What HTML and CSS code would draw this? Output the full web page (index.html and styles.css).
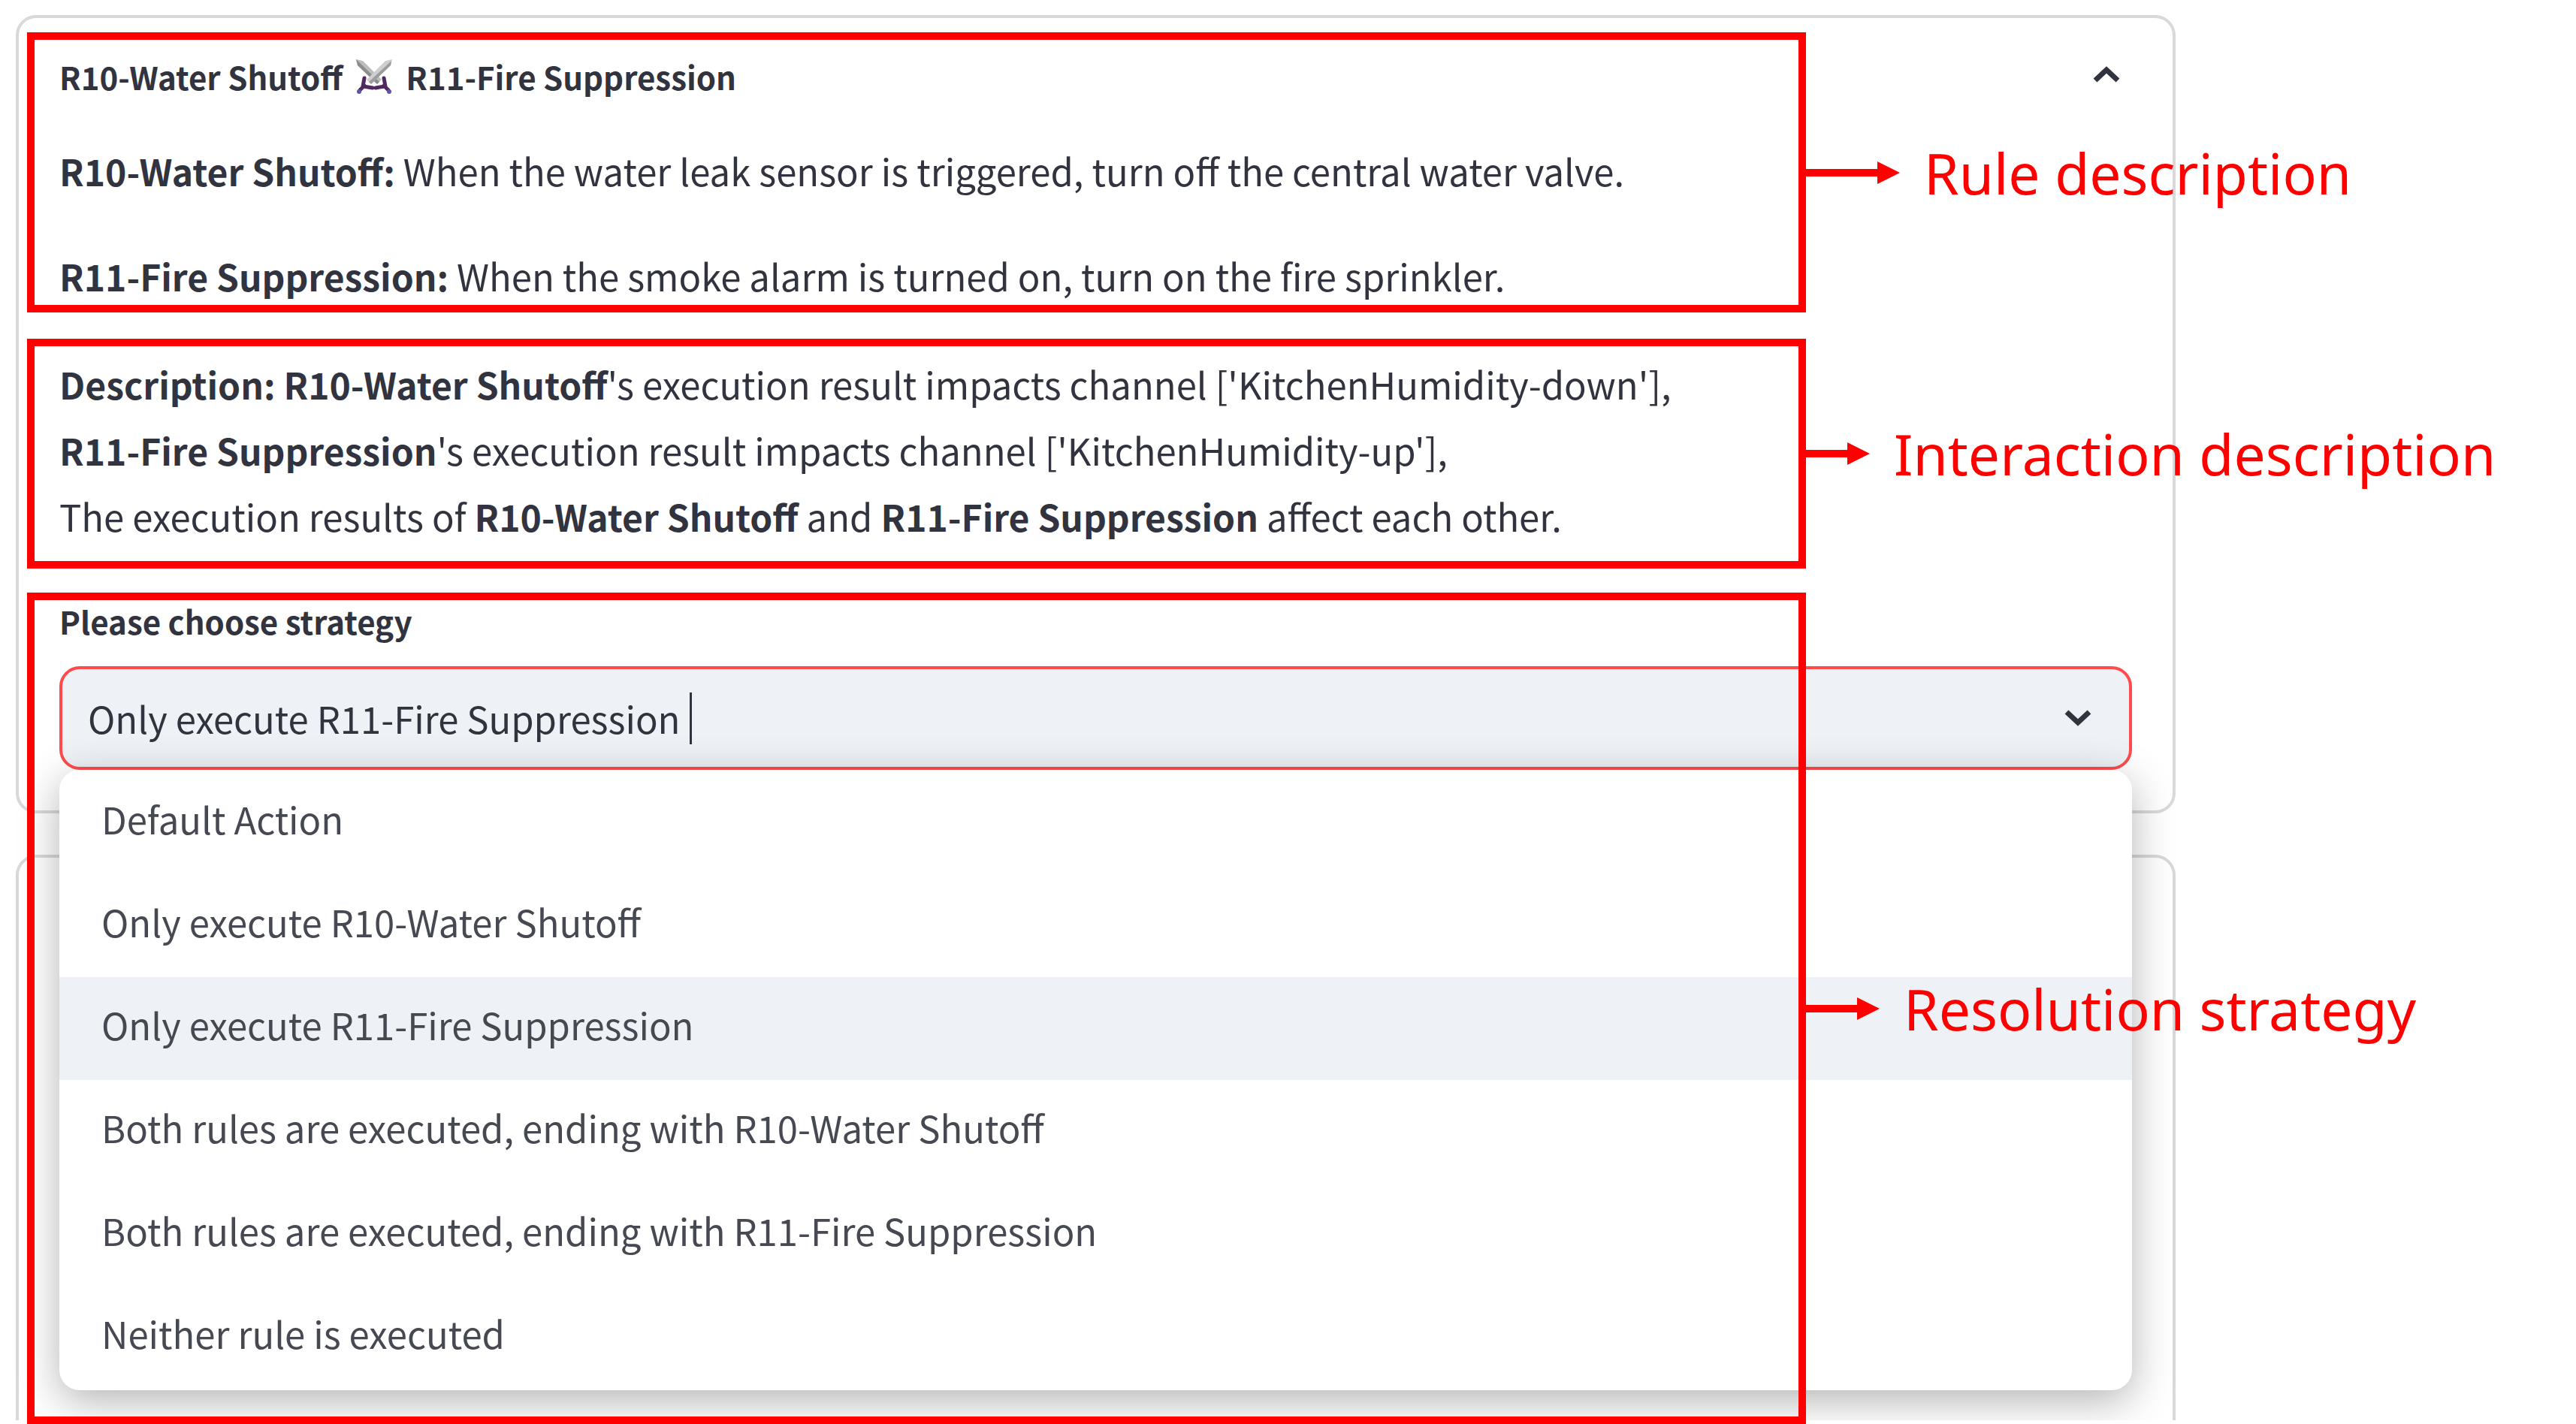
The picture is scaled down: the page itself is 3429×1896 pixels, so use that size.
FILE: index.html
```html
<!DOCTYPE html>
<html lang="en">
<head>
<meta charset="utf-8">
<title>Rule conflict resolution</title>
<link rel="stylesheet" href="styles.css">
</head>
<body>
<main>
  <article class="card">
    <section class="block rules">
      <header class="card-header">
        <h2 class="title">R10-Water Shutoff
          <svg class="swords" viewBox="0 0 50 48" aria-hidden="true">
            <g>
              <path d="M1 1l9 2 25 25-6 6L3 9z" fill="#bdbdbd"/>
              <path d="M1 1l31 30-3 3L3 9z" fill="#8c8c8c"/>
              <path d="M38 26l2 11M27 39l12-2M38 36l6 6" fill="none" stroke="#51285f" stroke-width="5" stroke-linecap="round"/>
              <circle cx="45" cy="44" r="3" fill="#5b55a5"/>
            </g>
            <g>
              <path d="M49 1l-9 2-25 25 6 6L47 9z" fill="#cfcfcf"/>
              <path d="M47 9L21 34l-3-3L48 3z" fill="#9c9c9c"/>
              <path d="M12 26l-2 11M23 39l-12-2M12 36l-6 6" fill="none" stroke="#51285f" stroke-width="5" stroke-linecap="round"/>
              <circle cx="5" cy="44" r="3" fill="#5b55a5"/>
            </g>
          </svg>
          R11-Fire Suppression</h2>
        <button class="toggle" type="button" aria-label="Collapse">
          <svg class="chevron" viewBox="0 0 36 22" aria-hidden="true"><path d="M3 19L18 5l15 14"/></svg>
        </button>
      </header>
      <p class="rule"><strong>R10-Water Shutoff:</strong> When the water leak sensor is triggered, turn off the central water valve.</p>
      <p class="rule"><strong>R11-Fire Suppression:</strong> When the smoke alarm is turned on, turn on the fire sprinkler.</p>
      <aside class="frame">
        <div class="callout"><span class="shaft shaft-long"></span><span class="head"></span><span class="label">Rule description</span></div>
      </aside>
    </section>

    <section class="block interaction">
      <p class="detail"><strong>Description: R10-Water Shutoff</strong>'s execution result impacts channel ['KitchenHumidity-down'],<br>
      <strong>R11-Fire Suppression</strong>'s execution result impacts channel ['KitchenHumidity-up'],<br>
      The execution results of <strong>R10-Water Shutoff</strong> and <strong>R11-Fire Suppression</strong> affect each other.</p>
      <aside class="frame">
        <div class="callout"><span class="shaft shaft-short"></span><span class="head"></span><span class="label">Interaction description</span></div>
      </aside>
    </section>

    <section class="block strategy">
      <label class="field-label" for="strategy">Please choose strategy</label>
      <div class="combo">
        <div class="control">
          <input id="strategy" class="value" type="text" role="combobox" aria-expanded="true" aria-controls="options" value="Only execute R11-Fire Suppression">
          <span class="caret"></span>
          <svg class="chevron" viewBox="0 0 36 22" aria-hidden="true"><path d="M3 3l15 14L33 3"/></svg>
        </div>
        <ul class="options" id="options" role="listbox">
          <li role="option">Default Action</li>
          <li role="option">Only execute R10-Water Shutoff</li>
          <li role="option" aria-selected="true">Only execute R11-Fire Suppression</li>
          <li role="option">Both rules are executed, ending with R10-Water Shutoff</li>
          <li role="option">Both rules are executed, ending with R11-Fire Suppression</li>
          <li role="option">Neither rule is executed</li>
        </ul>
      </div>
      <aside class="frame frame-tall">
        <div class="callout"><span class="shaft shaft-medium"></span><span class="head"></span><span class="label">Resolution strategy</span></div>
      </aside>
    </section>
  </article>
  <article class="card card-next"></article>
</main>
</body>
</html>
```
FILE: styles.css
```css
* {
  box-sizing: border-box;
}

body {
  margin: 0;
  background: #fff;
  color: #31333f;
  font-family: "Noto Sans CJK SC", "Noto Sans", sans-serif;
  font-size: 49px;
  line-height: 88px;
}

/* white edge under the cards */
body::after {
  content: "";
  position: absolute;
  inset: auto 0 0 0;
  height: 5px;
  background: #fff;
  z-index: 2;
}

main {
  display: flex;
  flex-direction: column;
  gap: 55px;
  min-height: 100vh;
  padding: 20px 533px 0 21px;
}

.card {
  border: 4px solid #d9d9db;
  border-radius: 27px;
  padding: 19px 54px 54px;
}

.card-next {
  flex: 1;
  border-bottom: 0;
  border-radius: 27px 27px 0 0;
}

h2,
p,
ul {
  margin: 0;
  padding: 0;
}

strong {
  font-size: 48px;
  font-weight: 700;
}

.block {
  position: relative;
}

.rules {
  height: 373px;
  margin-bottom: 35px;
}

.card-header {
  display: flex;
  align-items: center;
  justify-content: space-between;
  padding: 15px 16px 37px 0;
}

.title {
  display: flex;
  align-items: center;
  gap: 17px;
  font-size: 42px;
  font-weight: 700;
}

.swords {
  width: 50px;
  height: 48px;
}

.toggle {
  display: flex;
  border: 0;
  padding: 0 0 6px;
  background: none;
}

.chevron {
  width: 36px;
  height: 22px;
  fill: none;
  stroke: #31333f;
  stroke-width: 7px;
}

.rule + .rule {
  margin-top: 52px;
}

.interaction {
  height: 306px;
  margin-bottom: 32px;
  padding-top: 16px;
}

.field-label {
  display: block;
  height: 98px;
  font-size: 42px;
  line-height: 76px;
  font-weight: 700;
}

.combo {
  position: relative;
}

.control {
  display: flex;
  align-items: center;
  height: 138px;
  border: 4px solid #ff4b4b;
  border-radius: 27px;
  padding: 0 50px 0 34px;
  background: #eef1f6;
}

.value {
  width: 801px;
  border: 0;
  padding: 0;
  background: none;
  color: inherit;
  font: inherit;
}

.caret {
  width: 3px;
  height: 69px;
  background: #31333f;
}

.control .chevron {
  margin-left: auto;
}

.options {
  position: absolute;
  inset: 100% 0 auto 0;
  z-index: 1;
  overflow: hidden;
  padding: 2px 0;
  border-radius: 27px;
  background: #fff;
  box-shadow: 0 14px 55px rgba(0, 0, 0, 0.3);
  list-style: none;
}

.options li {
  padding: 0 56px 12px;
  line-height: 125px;
  color: #464852;
}

.options [aria-selected] {
  background: #eef1f6;
}

/* red outlines with their callouts, drawn over the cards */
.frame {
  position: absolute;
  inset: 0 434px 0 -43px;
  z-index: 3;
  border: 10px solid #f00;
  color: #f00;
  pointer-events: none;
}

.frame-tall {
  bottom: auto;
  height: 1107px;
}

.callout {
  position: absolute;
  left: 100%;
  top: 0;
  bottom: 0;
  display: flex;
  align-items: center;
  white-space: nowrap;
}

.shaft {
  height: 10px;
  background: #f00;
}

.shaft-long {
  width: 105px;
}

.shaft-medium {
  width: 78px;
}

.shaft-short {
  width: 65px;
}

.head {
  border: 15px solid transparent;
  border-left: 30px solid #f00;
  border-right: 0;
}

.label {
  padding-left: 32px;
  font-family: "Noto Sans", sans-serif;
  font-size: 75px;
}
```
